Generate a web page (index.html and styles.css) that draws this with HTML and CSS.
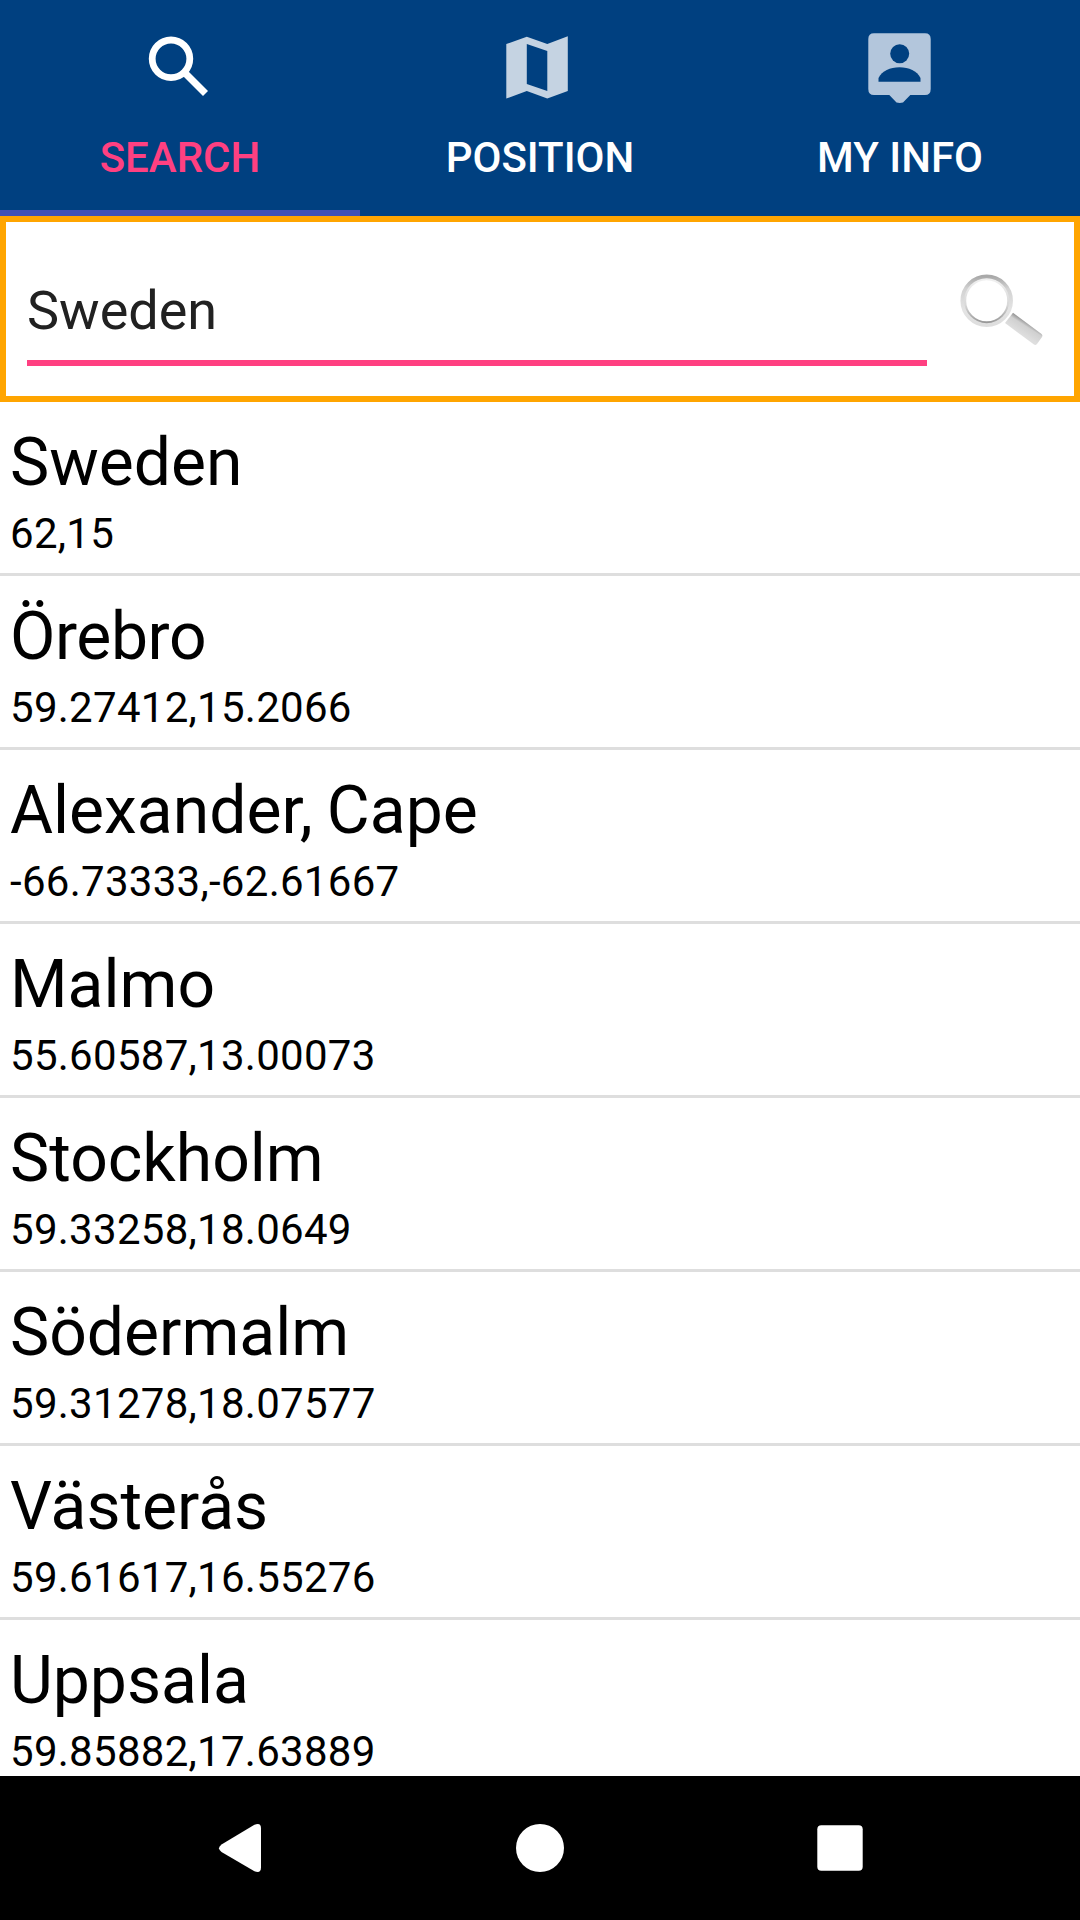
FILE: index.html
```html
<!DOCTYPE html>
<html lang="en">
<head>
  <meta charset="UTF-8">
  <meta name="viewport" content="width=device-width, initial-scale=1.0">
  <title>Search</title>
  <link rel="stylesheet" href="styles.css">
</head>
<body>
  <div class="screen">
    <nav class="tabs">
      <div class="tab active">
        <svg class="tab-icon" viewBox="0 0 72 72">
          <circle cx="27" cy="28.8" r="18.8" fill="none" stroke="#fff" stroke-width="6.8"/>
          <path d="M40.5 42.5L61.5 63.5" stroke="#fff" stroke-width="7"/>
        </svg>
        <span>SEARCH</span>
      </div>
      <div class="tab">
        <svg class="tab-icon" viewBox="0 0 72 72">
          <path fill="#c5d3e2" fill-rule="evenodd" d="M2.3 14L22.8 6.7L43.3 14L63.8 6.3V61L43.3 68.5L22.8 61L2.3 68.5ZM22.8 14V54L43.3 61V21Z"/>
        </svg>
        <span>POSITION</span>
      </div>
      <div class="tab">
        <svg class="tab-icon" viewBox="0 0 72 72">
          <path fill="#b3c6dc" d="M10 3.3H61Q66.7 3.3 66.7 9V59Q66.7 65 61 65H46.3L39 72.5Q35.7 73.3 32.5 72.5L25.3 65H10Q4.3 65 4.3 59V9Q4.3 3.3 10 3.3Z"/>
          <circle cx="35.7" cy="23.7" r="9.5" fill="#004080"/>
          <path fill="#004080" d="M14.5 51.7V48C18 41 26 37.3 35.5 37.3S53 41 56.5 48V51.7Z"/>
        </svg>
        <span>MY INFO</span>
      </div>
    </nav>

    <div class="search-box">
      <input class="search-input" type="text" value="Sweden">
      <svg class="search-btn" viewBox="0 0 96 96">
        <defs>
          <linearGradient id="rim" x1="0" y1="0" x2="0" y2="1">
            <stop offset="0" stop-color="#a9a9a9"/>
            <stop offset="0.25" stop-color="#d2d2d2"/>
            <stop offset="0.7" stop-color="#e4e4e4"/>
            <stop offset="1" stop-color="#dedede"/>
          </linearGradient>
          <linearGradient id="lens" x1="0" y1="0" x2="0" y2="1">
            <stop offset="0" stop-color="#f0f0f0"/>
            <stop offset="0.6" stop-color="#d8d8d8"/>
            <stop offset="1" stop-color="#999"/>
          </linearGradient>
          <linearGradient id="handle" gradientUnits="userSpaceOnUse" x1="76" y1="62" x2="69" y2="73">
            <stop offset="0" stop-color="#999"/>
            <stop offset="0.3" stop-color="#d0d0d0"/>
            <stop offset="1" stop-color="#dedede"/>
          </linearGradient>
        </defs>
        <circle cx="34.7" cy="39.7" r="24" fill="none" stroke="url(#rim)" stroke-width="4.5"/>
        <circle cx="34.7" cy="39.7" r="21.5" fill="none" stroke="url(#lens)" stroke-width="2"/>
        <path fill="url(#handle)" d="M61 51.7L89.5 73Q91 74.5 90 76L85 83Q83.5 84.5 82 83.5L53 62Z"/>
      </svg>
    </div>

    <ul class="results">
      <li><div class="name">Sweden</div><div class="coords">62,15</div></li>
      <li><div class="name tight">Örebro</div><div class="coords">59.27412,15.2066</div></li>
      <li><div class="name two-words">Alexander, Cape</div><div class="coords">-66.73333,-62.61667</div></li>
      <li><div class="name">Malmo</div><div class="coords">55.60587,13.00073</div></li>
      <li><div class="name">Stockholm</div><div class="coords">59.33258,18.0649</div></li>
      <li><div class="name">Södermalm</div><div class="coords">59.31278,18.07577</div></li>
      <li><div class="name">Västerås</div><div class="coords">59.61617,16.55276</div></li>
      <li><div class="name">Uppsala</div><div class="coords">59.85882,17.63889</div></li>
    </ul>

    <div class="navbar">
      <svg class="nav-icon" viewBox="0 0 48 48"><path fill="#fff" d="M5.5 20.5L38 1Q45 -2 45 4.5V43.5Q45 50 38 47L5.5 28Q0.5 24.3 5.5 20.5Z"/></svg>
      <svg class="nav-icon" viewBox="0 0 48 48"><circle cx="24" cy="24" r="24" fill="#fff"/></svg>
      <svg class="nav-icon" viewBox="0 0 48 48"><rect x="1.3" y="1.3" width="45.4" height="45.4" rx="4" fill="#fff"/></svg>
    </div>
  </div>
</body>
</html>
```

FILE: styles.css
```css
* {
  box-sizing: border-box;
}
body {
  margin: 0;
  font-family: Roboto, sans-serif;
  background-color: #fff;
  color: #000;
}
.screen {
  display: flex;
  flex-direction: column;
  height: 1920px;
  overflow: hidden;
}
.tabs {
  display: flex;
  flex: none;
  height: 216px;
  background-color: #004080;
}
.tab {
  flex: 1;
  display: flex;
  flex-direction: column;
  align-items: center;
  padding-top: 30px;
  color: #fff;
  font-size: 42px;
  font-weight: 500;
  line-height: 56px;
  border-bottom: 6px solid transparent;
}
.tab.active {
  color: #ff4081;
  border-bottom-color: #3f51b5;
}
.tab-icon {
  width: 72px;
  height: 72px;
  margin-bottom: 28px;
  overflow: visible;
}
.search-box {
  display: flex;
  flex: none;
  align-items: flex-start;
  height: 186px;
  padding: 39px 26px 0 21px;
  border: 6px solid #ffa500;
}
.search-input {
  width: 900px;
  height: 105px;
  margin-right: 25px;
  padding: 0 0 1px;
  border: none;
  border-bottom: 6px solid #ff4081;
  outline: none;
  background: none;
  color: #212121;
  font-family: inherit;
  font-size: 54px;
}
.search-btn {
  width: 96px;
  height: 96px;
}
.results {
  flex: 1;
  min-height: 0;
  margin: 0;
  padding: 0;
  overflow: hidden;
  list-style: none;
}
.results li {
  height: 174px;
  padding: 17px 10px 0;
  border-bottom: 3px solid #dedede;
}
.name {
  font-size: 66px;
  line-height: 88px;
}
.name.tight {
  letter-spacing: -0.4px;
}
.name.two-words {
  word-spacing: -2.4px;
}
.coords {
  margin-top: -1px;
  font-size: 42px;
  line-height: 56px;
  letter-spacing: 0.28px;
}
.navbar {
  display: flex;
  flex: none;
  align-items: center;
  justify-content: center;
  gap: 252px;
  height: 144px;
  background-color: #000;
}
.nav-icon {
  width: 48px;
  height: 48px;
}
```
